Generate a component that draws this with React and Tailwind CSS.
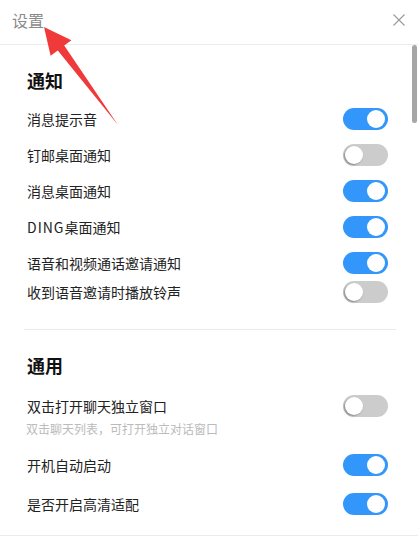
const notify = [
  { label: '消息提示音', on: true },
  { label: '钉邮桌面通知', on: false },
  { label: '消息桌面通知', on: true },
  {
    label: (
      <>
        <span className="tracking-[1px]">DING</span>桌面通知
      </>
    ),
    key: 'ding',
    on: true,
  },
  { label: '语音和视频通话邀请通知', on: true },
];

function Toggle({ on }) {
  return (
    <div
      className={`relative w-[45px] h-[22px] rounded-full shrink-0 ${
        on ? 'bg-[#3296fa]' : 'bg-[#cccccc]'
      }`}
    >
      <div
        className={`absolute top-[2px] w-[18px] h-[18px] rounded-full bg-white ${
          on ? 'right-[3px]' : 'left-[2px] shadow-[-1px_1px_2px_rgba(0,0,0,0.35)]'
        }`}
      />
    </div>
  );
}

function Row({ label, on, className = 'h-[36px]' }) {
  return (
    <div className={`flex items-center justify-between pl-[3px] pr-[8px] ${className}`}>
      <span className="text-[14px] leading-[22px] text-[#222]">{label}</span>
      <Toggle on={on} />
    </div>
  );
}

export default function App() {
  return (
    <div className="relative w-[418px] h-[536px] overflow-hidden bg-white border-b border-[#ececec] font-['Noto_Sans_CJK_SC','Microsoft_YaHei',sans-serif]">
      {/* header */}
      <div className="h-[45px] border-b border-[#ececec] flex items-start justify-between pl-[12px] pr-[13px] pt-[10px]">
        <span className="text-[16px] leading-[20px] text-[#8a8a8a]">设置</span>
        <svg width="12" height="12" viewBox="0 0 12 12" className="mt-[4px]">
          <path d="M0.5 0.5 L11.5 11.5 M11.5 0.5 L0.5 11.5" stroke="#9a9a9a" strokeWidth="1.1" />
        </svg>
      </div>

      <div className="pl-[24px] pr-[22px]">
        <h2 className="mt-[23px] pl-[3px] text-[18px] leading-[24px] font-bold text-[#111]">通知</h2>
        <div className="mt-[9px]">
          {notify.map((r) => (
            <Row key={r.key || r.label} label={r.label} on={r.on} />
          ))}
          <Row label="收到语音邀请时播放铃声" on={false} className="h-[22px]" />
        </div>

        <div className="mt-[26px] border-t border-[#ececec]" />

        <h2 className="mt-[23px] pl-[3px] text-[18px] leading-[24px] font-bold text-[#111]">通用</h2>
        <Row label="双击打开聊天独立窗口" on={false} className="h-[22px] mt-[18px]" />
        <p className="mt-[4px] pl-[2px] text-[12px] leading-[16px] text-[#bbbbbb]">
          双击聊天列表，可打开独立对话窗口
        </p>
        <Row label="开机自动启动" on={true} className="h-[22px] mt-[17px]" />
        <Row label="是否开启高清适配" on={true} className="h-[22px] mt-[17px]" />
      </div>

      {/* scrollbar thumb */}
      <div className="absolute left-[412px] top-[45px] w-[5px] h-[78px] rounded-full bg-[#a6a6a6]" />

      {/* annotation arrow */}
      <svg className="absolute left-0 top-0 pointer-events-none" width="418" height="536">
        <polygon
          points="44,27 71.4,40.3 64.2,45.6 118,125 57.8,50.4 50.6,55.7"
          fill="#f03a3a"
        />
      </svg>
    </div>
  );
}
